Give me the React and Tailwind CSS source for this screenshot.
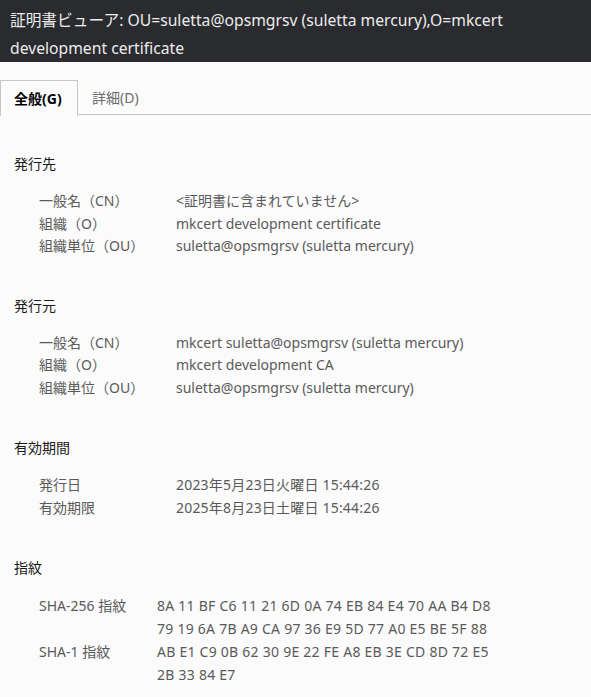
import React from "react";

const font = { fontFamily: '"Noto Sans", "Noto Sans CJK JP", sans-serif' };

function Section({ title, rows, labelW = "w-[137px]", rowLead = "leading-[22.5px]", valueCls = "" }) {
  return (
    <div className="flex flex-col">
      <div className="text-[14px] leading-[23px] text-[#1a1a1a]">{title}</div>
      <div className="mt-[15px] flex flex-col pl-[25px]">
        {rows.map(([k, v], i) => (
          <div key={i} className={`flex text-[14px] ${rowLead} text-[#5a5a5a]`}>
            <div className={`${labelW} shrink-0`}>{k}</div>
            <div className={`flex flex-col ${valueCls}`}>
              {Array.isArray(v) ? v.map((l, j) => <div key={j}>{l}</div>) : v}
            </div>
          </div>
        ))}
      </div>
    </div>
  );
}

export default function App() {
  return (
    <div style={font} className="w-[591px] h-[697px] overflow-hidden bg-[#fbfbfb]">
      <div className="bg-[#2a2b2f] pl-[10px] pr-[6px] pt-[6px] text-[15.7px] leading-[28px] text-[#ececec]">
        証明書ビューア: OU=suletta@opsmgrsv (suletta mercury),O=mkcert development certificate
      </div>
      <div className="mt-[18px] flex border-b border-[#c6c6c6] h-[35px]">
        <div className="w-[78px] h-[36px] border border-b-0 border-[#c6c6c6] bg-[#fbfbfb] flex items-center pl-[13px] text-[14px] font-bold text-black">
          全般(G)
        </div>
        <div className="flex items-center pl-[14px] text-[14px] text-[#6a6a6a]">詳細(D)</div>
      </div>
      <div className="flex flex-col pl-[14px] pt-[37px]">
        <Section
          title="発行先"
          rows={[
            ["一般名（CN）", "<証明書に含まれていません>"],
            ["組織（O）", "mkcert development certificate"],
            ["組織単位（OU）", "suletta@opsmgrsv (suletta mercury)"],
          ]}
        />
        <div className="h-[36px]" />
        <Section
          title="発行元"
          rows={[
            ["一般名（CN）", "mkcert suletta@opsmgrsv (suletta mercury)"],
            ["組織（O）", "mkcert development CA"],
            ["組織単位（OU）", "suletta@opsmgrsv (suletta mercury)"],
          ]}
        />
        <div className="h-[37px]" />
        <Section
          title="有効期間"
          valueCls="tracking-[0.2px]"
          rows={[
            ["発行日", "2023年5月23日火曜日 15:44:26"],
            ["有効期限", "2025年8月23日土曜日 15:44:26"],
          ]}
        />
        <div className="h-[37px]" />
        <Section
          title="指紋"
          labelW="w-[118px]"
          rowLead="leading-[23px]"
          valueCls="tracking-[0.25px]"
          rows={[
            ["SHA-256 指紋", ["8A 11 BF C6 11 21 6D 0A 74 EB 84 E4 70 AA B4 D8", "79 19 6A 7B A9 CA 97 36 E9 5D 77 A0 E5 BE 5F 88"]],
            ["SHA-1 指紋", ["AB E1 C9 0B 62 30 9E 22 FE A8 EB 3E CD 8D 72 E5", "2B 33 84 E7"]],
          ]}
        />
      </div>
    </div>
  );
}
